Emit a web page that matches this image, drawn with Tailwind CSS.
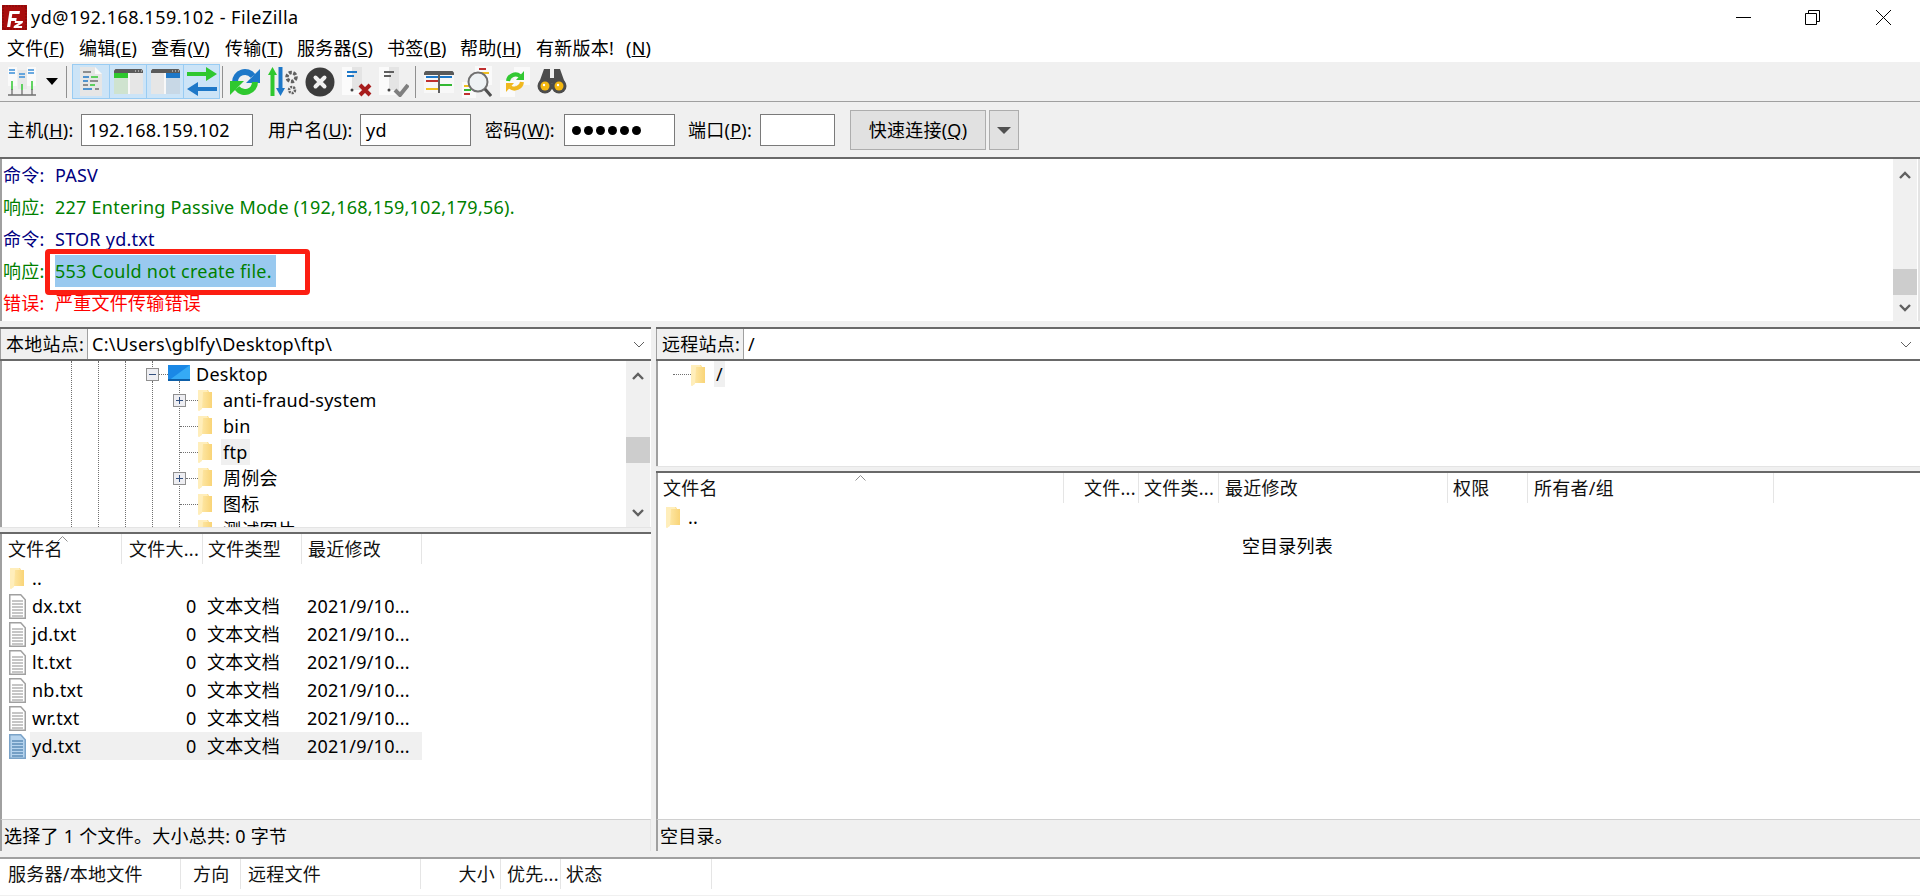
<!DOCTYPE html>
<html lang="en">
<head>
  <meta charset="UTF-8" />
  <title>yd@192.168.159.102 - FileZilla</title>
  <script src="https://cdn.jsdelivr.net/npm/@tailwindcss/browser@4"></script>
</head>
<body class="w-[1920px] h-[896px] overflow-hidden bg-[#f0f0f0] text-[18px] leading-none tracking-[0.25px] text-black font-['Noto_Sans','Noto_Sans_CJK_SC',sans-serif]">

  <!-- shared icons -->
  <svg class="absolute w-0 h-0">
    <defs>
      <linearGradient id="fold" x1="0" x2="1" y1="0" y2="0"><stop offset="0" stop-color="#ffedb4"/><stop offset="1" stop-color="#f9d477"/></linearGradient>
    </defs>
    <symbol id="folder" viewBox="0 0 14 22">
      <path d="M0 1h10l1 2h3v16H3l-2 3L0 21z" fill="url(#fold)"/>
      <path d="M0 1h9l1 2H5l-1 17-3 2-1-1z" fill="#ffeebb"/>
    </symbol>
    <symbol id="doc" viewBox="0 0 17 25" preserveAspectRatio="none">
      <path d="M.75.75h11l4.500 5v18.500H.75z" fill="#fff" stroke="#a0a0a0" stroke-width="1.500"/>
      <path d="M3 7h11M3 10h11M3 13h11M3 16h11M3 19h11M3 22h11" stroke="#b4b4b4" stroke-width="1.500"/>
    </symbol>
    <symbol id="docblue" viewBox="0 0 17 25" preserveAspectRatio="none">
      <path d="M.75.75h11l4.500 5v18.500H.75z" fill="#b7d4ee" stroke="#7ba3c8" stroke-width="1.500"/>
      <path d="M3 7h11M3 10h11M3 13h11M3 16h11M3 19h11M3 22h11" stroke="#5f8db8" stroke-width="1.500"/>
    </symbol>
    <symbol id="up" viewBox="0 0 12 8"><path d="M1 7l5-5 5 5" fill="none" stroke="#606060" stroke-width="2.400"/></symbol>
    <symbol id="down" viewBox="0 0 12 8"><path d="M1 1l5 5 5-5" fill="none" stroke="#606060" stroke-width="2.400"/></symbol>
    <symbol id="chev" viewBox="0 0 12 7"><path d="M1 1l5 5 5-5" fill="none" stroke="#606060" stroke-width="1"/></symbol>
    <symbol id="sort" viewBox="0 0 11 6"><path d="M.5 5.500l5-5 5 5" fill="none" stroke="#909090" stroke-width="1"/></symbol>
    <symbol id="plus" viewBox="0 0 13 13">
      <rect x=".5" y=".5" width="12" height="12" fill="#eeeef2" stroke="#8f8f8f"/>
      <path d="M3 6.500h7M6.500 3v7" stroke="#33507f" stroke-width="1"/>
    </symbol>
  </svg>

  <!-- title bar -->
  <header class="h-[34px] bg-white flex items-center pl-[2px]">
    <svg class="w-[25px] h-[25px]" viewBox="0 0 25 25">
      <rect width="25" height="25" fill="#a80d0d"/>
      <rect x="1" y="1" width="23" height="23" fill="none" stroke="#7c0808" stroke-dasharray="2 1"/>
      <path d="M5 22l2.500-16h10.500l-.5 3H10.300l-.6 4h5l-.5 3h-5l-1 6z" fill="#fff"/>
      <path d="M13 16h8l-.4 2-4.600 3h4.200l-.3 2h-8.400l.4-2 4.700-3h-3.900z" fill="#fff"/>
    </svg>
    <span class="ml-[4px] tracking-[0.5px]">yd@192.168.159.102 - FileZilla</span>
    <div class="ml-auto flex items-center h-full">
      <svg class="w-[15px] h-[15px] mr-[54px]" viewBox="0 0 15 15"><path d="M0 7.500h15" stroke="#000"/></svg>
      <svg class="w-[15px] h-[15px] mr-[56px]" viewBox="0 0 15 15"><path d="M.5 3.500h11v11H.5zM3.500 3.500v-3h11v11h-3" fill="none" stroke="#000"/></svg>
      <svg class="w-[15px] h-[15px] mr-[29px]" viewBox="0 0 15 15"><path d="M0 0l15 15M15 0L0 15" stroke="#000"/></svg>
    </div>
  </header>

  <!-- menu -->
  <nav class="h-[28px] bg-white flex items-center pl-[7px] pb-[1px]">
    <span class="w-[72px]">文件(<u>F</u>)</span>
    <span class="w-[72px]">编辑(<u>E</u>)</span>
    <span class="w-[74px]">查看(<u>V</u>)</span>
    <span class="w-[72px]">传输(<u>T</u>)</span>
    <span class="w-[90px]">服务器(<u>S</u>)</span>
    <span class="w-[73px]">书签(<u>B</u>)</span>
    <span class="w-[76px]">帮助(<u>H</u>)</span>
    <span class="w-[90px]">有新版本!</span>
    <span>(<u>N</u>)</span>
  </nav>

  <!-- toolbar -->
  <div class="h-[40px] flex items-center border-b border-[#a0a0a0] pl-[7px]">
    <svg class="w-[30px] h-[30px]" viewBox="0 0 30 30">
      <rect x="1" y="0" width="9" height="19" fill="#fafafa"/><rect x="11" y="3" width="9" height="19" fill="#e8e8e8"/><rect x="20" y="0" width="9" height="19" fill="#fafafa"/>
      <path d="M2 3h6M2 6h6M12 7h6M12 10h6M21 3h6M21 6h6" stroke="#3b8fd8" stroke-width="1.300"/>
      <path d="M5 14v9M15 17v6M25 14v9" stroke="#32c832" stroke-width="1.500"/>
      <path d="M1 28h28" stroke="#707070" stroke-width="1.500"/>
      <path d="M5 22v6M15 23v5M25 22v6" stroke="#707070" stroke-width="1.300"/>
    </svg>
    <svg class="w-[12px] h-[7px] ml-[9px]" viewBox="0 0 12 7"><path d="M0 0h12L6 7z" fill="#000"/></svg>
    <div class="w-px h-[32px] bg-[#909090] ml-[8px]"></div>
    <div class="flex ml-[5px] h-[35px] w-[148px] bg-[#cce4f7] border border-[#99ccf3]">
      <div class="w-[37px] flex items-center justify-center border-r border-[#99ccf3]">
        <svg class="w-[24px] h-[29px]" viewBox="0 0 24 29">
          <path d="M1 0h15l7 7v22H1z" fill="#e6e6e6"/><path d="M16 0l7 7h-7z" fill="#fafafa"/>
          <path d="M4 5h8" stroke="#707070" stroke-width="1.500"/>
          <path d="M4 10h6M4 14h5M4 22h9" stroke="#1e78c8" stroke-width="1.500"/>
          <path d="M12 10h7M11 18h5" stroke="#32c832" stroke-width="1.500"/>
          <path d="M11 14h8M4 18h5M16 22h4" stroke="#707070" stroke-width="1.500"/>
        </svg>
      </div>
      <div class="w-[37px] flex items-center justify-center border-r border-[#99ccf3]">
        <svg class="w-[29px] h-[25px]" viewBox="0 0 29 25">
          <rect width="29" height="25" fill="#e6e6e6"/><path d="M0 4V1.500L1.500 0h26L29 1.500V4z" fill="#5a5a5a"/>
          <path d="M21 2h1M24 2h1M27 2h1" stroke="#e6e6e6"/>
          <rect y="4" width="14" height="5" fill="#2fc82f"/><rect y="9" width="14" height="16" fill="#cfe3cf"/>
          <rect x="14" y="4" width="2" height="21" fill="#f8f8f8"/>
        </svg>
      </div>
      <div class="w-[37px] flex items-center justify-center border-r border-[#99ccf3]">
        <svg class="w-[29px] h-[25px]" viewBox="0 0 29 25">
          <rect width="29" height="25" fill="#e6e6e6"/><path d="M0 4V1.500L1.500 0h26L29 1.500V4z" fill="#5a5a5a"/>
          <path d="M21 2h1M24 2h1M27 2h1" stroke="#e6e6e6"/>
          <rect x="15" y="4" width="14" height="5" fill="#1e78c8"/><rect x="15" y="9" width="14" height="16" fill="#c8d8e6"/>
          <rect x="13" y="4" width="2" height="21" fill="#f8f8f8"/>
        </svg>
      </div>
      <div class="flex-1 flex items-center justify-center">
        <svg class="w-[30px] h-[29px]" viewBox="0 0 30 29">
          <path d="M0 5h19V0l11 7-11 7V9H0z" fill="#2fc82f"/>
          <path d="M30 20H11v-5L0 22l11 7v-5h19z" fill="#1e78c8"/>
        </svg>
      </div>
    </div>
    <div class="w-px h-[32px] bg-[#909090] ml-[2px]"></div>
    <svg class="w-[30px] h-[28px] ml-[7px]" viewBox="0 0 30 28">
      <path d="M5 14A10 10 0 0 1 23 8" fill="none" stroke="#1e78c8" stroke-width="6"/>
      <path d="M30 1v14H16z" fill="#1e78c8"/>
      <path d="M25 14A10 10 0 0 1 7 20" fill="none" stroke="#2fc82f" stroke-width="6"/>
      <path d="M0 27V13h14z" fill="#2fc82f"/>
    </svg>
    <svg class="w-[30px] h-[31px] ml-[8px]" viewBox="0 0 30 31">
      <path d="M4.500 1L9 9H6.500v21h-4V9H0z" fill="#2fc82f"/>
      <path d="M10.500 1h4v21H17l-4.500 8L8 22h2.500z" fill="#1e78c8"/>
      <circle cx="23.500" cy="11" r="4.500" fill="none" stroke="#606060" stroke-width="3.500" stroke-dasharray="3 1.500"/>
      <circle cx="24" cy="24" r="3" fill="none" stroke="#606060" stroke-width="2.500" stroke-dasharray="2 1"/>
    </svg>
    <svg class="w-[30px] h-[30px] ml-[7px]" viewBox="0 0 30 30">
      <circle cx="15" cy="15" r="14.500" fill="#3c3c3c"/>
      <path d="M10.500 10.500l9 9M19.500 10.500l-9 9" stroke="#f0f0f0" stroke-width="4" stroke-linecap="round"/>
    </svg>
    <svg class="w-[30px] h-[30px] ml-[7px]" viewBox="0 0 30 30">
      <rect x="0" y="0" width="20" height="28" fill="#fbfbfb"/><rect x="10" y="0" width="10" height="23" fill="#e4e4e4"/>
      <path d="M5 5h10M5 9h7" stroke="#1e78c8" stroke-width="2"/>
      <circle cx="10" cy="23" r="1.500" fill="#444"/>
      <path d="M18 18l10 10M28 18L18 28" stroke="#a81c1c" stroke-width="4"/>
    </svg>
    <svg class="w-[30px] h-[30px] ml-[7px]" viewBox="0 0 30 30">
      <rect x="0" y="0" width="20" height="28" fill="#fbfbfb"/><rect x="10" y="0" width="10" height="23" fill="#e4e4e4"/>
      <path d="M5 5h10M5 9h7" stroke="#606060" stroke-width="2"/>
      <circle cx="10" cy="23" r="1.500" fill="#444"/>
      <path d="M16 23l5 5 8-10" fill="none" stroke="#808080" stroke-width="4"/>
    </svg>
    <div class="w-px h-[32px] bg-[#909090] ml-[6px]"></div>
    <svg class="w-[30px] h-[22px] ml-[8px]" viewBox="0 0 30 22">
      <rect width="30" height="22" fill="#f8f8f8"/><path d="M0 4V1.500L1.500 0h27L30 1.500V4z" fill="#5a5a5a"/>
      <path d="M2 6h26" stroke="#1e78c8" stroke-width="2"/><path d="M2 10h13" stroke="#c03030" stroke-width="2"/>
      <path d="M15 14h13" stroke="#32b832" stroke-width="2"/><path d="M2 18h13" stroke="#f0c020" stroke-width="2"/>
      <path d="M15 4v18" stroke="#606060" stroke-width="2"/>
    </svg>
    <svg class="w-[30px] h-[32px] ml-[8px]" viewBox="0 0 30 32">
      <rect x="13" y="0" width="17" height="19" fill="#fafafa"/><path d="M17 3h7" stroke="#c03030" stroke-width="2"/><path d="M17 7h10" stroke="#f0c020" stroke-width="2"/>
      <rect x="0" y="16" width="14" height="16" fill="#fafafa"/><path d="M2 20h6" stroke="#f0c020" stroke-width="2"/><path d="M2 24h7" stroke="#32b832" stroke-width="2"/><path d="M2 28h6" stroke="#c03030" stroke-width="2"/>
      <circle cx="16" cy="16" r="9.500" fill="#eef2f4" stroke="#707070" stroke-width="2"/>
      <path d="M23 23l6 7" stroke="#505050" stroke-width="3"/>
    </svg>
    <svg class="w-[30px] h-[30px] ml-[8px]" viewBox="0 0 30 30">
      <rect x="14" y="0" width="16" height="18" fill="#fafafa"/><rect x="0" y="13" width="15" height="17" fill="#fafafa"/>
      <path d="M8 14A7.500 7.500 0 0 1 20 9" fill="none" stroke="#32c832" stroke-width="4"/>
      <path d="M24 4v9h-8z" fill="#32c832"/>
      <path d="M22 15A7.500 7.500 0 0 1 10 20" fill="none" stroke="#f0b820" stroke-width="4"/>
      <path d="M6 25v-9h8z" fill="#f0b820"/>
    </svg>
    <svg class="w-[30px] h-[25px] ml-[7px]" viewBox="0 0 30 25">
      <path d="M7 0h6v9h4V0h6l5 14H2z" fill="#4c4c4c"/>
      <circle cx="8" cy="17" r="7.500" fill="#4c4c4c"/><circle cx="22" cy="17" r="7.500" fill="#4c4c4c"/>
      <circle cx="8" cy="17" r="4.500" fill="#f5b810"/><circle cx="22" cy="17" r="4.500" fill="#f5b810"/>
      <circle cx="7" cy="16" r="1.200" fill="#fff"/><circle cx="21" cy="16" r="1.200" fill="#fff"/>
    </svg>
  </div>

  <!-- quickconnect -->
  <div class="h-[56px] mt-px flex items-center pl-[7px] border-b-2 border-[#696969]">
    <span class="w-[74px]">主机(<u>H</u>):</span>
    <div class="w-[172px] h-[32px] bg-white border border-[#7a7a7a] flex items-center pl-[6px]">192.168.159.102</div>
    <span class="ml-[15px] w-[92px]">用户名(<u>U</u>):</span>
    <div class="w-[111px] h-[32px] bg-white border border-[#7a7a7a] flex items-center pl-[5px]">yd</div>
    <span class="ml-[14px] w-[79px]">密码(<u>W</u>):</span>
    <div class="w-[111px] h-[32px] bg-white border border-[#7a7a7a] flex items-center pl-[7px] gap-[3px]">
      <i class="w-[9px] h-[9px] rounded-full bg-black"></i><i class="w-[9px] h-[9px] rounded-full bg-black"></i><i class="w-[9px] h-[9px] rounded-full bg-black"></i><i class="w-[9px] h-[9px] rounded-full bg-black"></i><i class="w-[9px] h-[9px] rounded-full bg-black"></i><i class="w-[9px] h-[9px] rounded-full bg-black"></i>
    </div>
    <span class="ml-[13px] w-[72px]">端口(<u>P</u>):</span>
    <div class="w-[75px] h-[32px] bg-white border border-[#7a7a7a]"></div>
    <div class="ml-[15px] w-[136px] h-[40px] bg-[#e1e1e1] border border-[#adadad] flex items-center justify-center">快速连接(<u>Q</u>)</div>
    <div class="ml-[3px] w-[30px] h-[40px] bg-[#e1e1e1] border border-[#adadad] flex items-center justify-center">
      <svg class="w-[14px] h-[7px]" viewBox="0 0 14 7"><path d="M0 0h14L7 7z" fill="#505050"/></svg>
    </div>
  </div>

  <!-- message log -->
  <section class="relative h-[162px] bg-white border-r-2 border-[#e4e4e4] flex">
    <div class="flex-1 pl-[1px] border-l-2 border-[#a0a0a0]">
      <div class="h-[32px] flex items-center text-[#000080]"><span class="w-[52px]">命令:</span>PASV</div>
      <div class="h-[32px] flex items-center text-[#008000]"><span class="w-[52px]">响应:</span>227 Entering Passive Mode (192,168,159,102,179,56).</div>
      <div class="h-[32px] flex items-center text-[#000080]"><span class="w-[52px]">命令:</span>STOR yd.txt</div>
      <div class="h-[32px] flex items-center text-[#008000]"><span class="w-[52px]">响应:</span><span class="h-[32px] w-[221px] flex items-center bg-[#99c9ef]">553 Could not create file.</span></div>
      <div class="h-[32px] flex items-center text-[#ff0000]"><span class="w-[52px]">错误:</span>严重文件传输错误</div>
    </div>
    <div class="w-[24px] mr-px bg-[#f0f0f0] flex flex-col items-center relative">
      <svg class="w-[12px] h-[8px] mt-[12px]" viewBox="0 0 12 8"><use href="#up"/></svg>
      <div class="mt-auto w-full h-[26px] bg-[#cdcdcd]"></div>
      <svg class="w-[12px] h-[8px] my-[9px]" viewBox="0 0 12 8"><use href="#down"/></svg>
    </div>
    <div class="absolute left-[45px] top-[90px] w-[265px] h-[46px] border-[5px] border-[#fc1e12] rounded-[4px]"></div>
  </section>

  <!-- panes -->
  <div class="flex h-[530px] pt-[6px]">
    <!-- local -->
    <div class="w-[651px] flex flex-col">
      <div class="h-[34px] flex border-t-2 border-b-2 border-t-[#696969] border-b-[#696969] bg-white">
        <div class="w-[88px] bg-[#f0f0f0] border-x border-[#a0a0a0] flex items-center pl-[5px]">本地站点:</div>
        <div class="flex-1 pl-[4px] flex items-center">C:\Users\gblfy\Desktop\ftp\</div>
        <svg class="w-[12px] h-[7px] self-center mr-[6px]" viewBox="0 0 12 7"><use href="#chev"/></svg>
      </div>
      <div class="relative h-[166px] bg-white border-l-2 border-[#a0a0a0] overflow-hidden flex">
        <i class="absolute left-[69px] top-0 h-full border-l border-dotted border-[#707070]"></i>
        <i class="absolute left-[96px] top-0 h-full border-l border-dotted border-[#707070]"></i>
        <i class="absolute left-[123px] top-0 h-full border-l border-dotted border-[#707070]"></i>
        <i class="absolute left-[150px] top-0 h-[8px] border-l border-dotted border-[#707070]"></i>
        <i class="absolute left-[150px] top-[20px] h-full border-l border-dotted border-[#707070]"></i>
        <i class="absolute left-[177px] top-[20px] h-full border-l border-dotted border-[#707070]"></i>
        <div class="flex-1 relative">
          <div class="h-[26px] flex items-center pl-[144px]">
            <svg class="w-[13px] h-[13px] shrink-0" viewBox="0 0 13 13"><rect x=".5" y=".5" width="12" height="12" fill="#eeeef2" stroke="#8f8f8f"/><path d="M3 6.500h7" stroke="#33507f"/></svg>
            <i class="w-[9px] border-t border-dotted border-[#707070]"></i>
            <svg class="w-[22px] h-[16px] mb-[2px] shrink-0" viewBox="0 0 22 16"><rect width="22" height="16" fill="#1a88e6"/><path d="M0 16L22 0v15H0z" fill="#35aaf5"/><rect y="14" width="22" height="2" fill="#0d5fa8"/></svg>
            <span class="ml-[6px]">Desktop</span>
          </div>
          <div class="h-[26px] flex items-center pl-[171px]">
            <svg class="w-[13px] h-[13px] shrink-0"><use href="#plus"/></svg>
            <i class="w-[12px] border-t border-dotted border-[#707070]"></i>
            <svg class="w-[14px] h-[22px] shrink-0"><use href="#folder"/></svg>
            <span class="ml-[11px]">anti-fraud-system</span>
          </div>
          <div class="h-[26px] flex items-center pl-[178px]">
            <i class="w-[18px] border-t border-dotted border-[#707070]"></i>
            <svg class="w-[14px] h-[22px] shrink-0"><use href="#folder"/></svg>
            <span class="ml-[11px]">bin</span>
          </div>
          <div class="h-[26px] flex items-center pl-[178px]">
            <i class="w-[18px] border-t border-dotted border-[#707070]"></i>
            <svg class="w-[14px] h-[22px] shrink-0"><use href="#folder"/></svg>
            <span class="ml-[9px] h-[26px] px-[2px] flex items-center bg-[#f0f0f0]">ftp</span>
          </div>
          <div class="h-[26px] flex items-center pl-[171px]">
            <svg class="w-[13px] h-[13px] shrink-0"><use href="#plus"/></svg>
            <i class="w-[12px] border-t border-dotted border-[#707070]"></i>
            <svg class="w-[14px] h-[22px] shrink-0"><use href="#folder"/></svg>
            <span class="ml-[11px]">周例会</span>
          </div>
          <div class="h-[26px] flex items-center pl-[178px]">
            <i class="w-[18px] border-t border-dotted border-[#707070]"></i>
            <svg class="w-[14px] h-[22px] shrink-0"><use href="#folder"/></svg>
            <span class="ml-[11px]">图标</span>
          </div>
          <div class="h-[26px] flex items-center pl-[196px]">
            <svg class="w-[14px] h-[22px] shrink-0"><use href="#folder"/></svg>
            <span class="ml-[11px]">测试图片</span>
          </div>
        </div>
        <div class="w-[24px] mr-px bg-[#f0f0f0] flex flex-col items-center relative">
          <svg class="w-[12px] h-[8px] mt-[11px]" viewBox="0 0 12 8"><use href="#up"/></svg>
          <div class="w-full h-[26px] bg-[#cdcdcd] mt-[57px]"></div>
          <svg class="w-[12px] h-[8px] mt-[46px]" viewBox="0 0 12 8"><use href="#down"/></svg>
        </div>
      </div>
      <div class="h-[7px] border-t border-[#e4e4e4] border-b-2 border-b-[#696969]"></div>
      <div class="flex-1 bg-white border-l-2 border-[#a0a0a0] flex flex-col relative">
        <div class="h-[30px] flex items-center text-[#111]">
          <div class="w-[120px] h-full border-r border-[#e5e5e5] flex items-center pl-[6px]">文件名</div>
          <div class="w-[81px] h-full border-r border-[#e5e5e5] flex items-center pl-[7px] whitespace-nowrap">文件大...</div>
          <div class="w-[99px] h-full border-r border-[#e5e5e5] flex items-center pl-[5px]">文件类型</div>
          <div class="w-[120px] h-full border-r border-[#e5e5e5] flex items-center pl-[6px]">最近修改</div>
        </div>
        <svg class="absolute left-[55px] top-[2px] w-[11px] h-[6px]" viewBox="0 0 11 6"><use href="#sort"/></svg>
        <div class="h-[28px] flex items-center pl-[8px]"><svg class="w-[14px] h-[22px]"><use href="#folder"/></svg><span class="ml-[8px]">..</span></div>
        <div class="h-[28px] flex items-center pl-[7px]"><svg class="w-[17px] h-[25px] shrink-0"><use href="#doc"/></svg><span class="w-[154px] ml-[6px]">dx.txt</span><span class="w-[8px]">0</span><span class="ml-[13px] w-[100px]">文本文档</span><span>2021/9/10...</span></div>
        <div class="h-[28px] flex items-center pl-[7px]"><svg class="w-[17px] h-[25px] shrink-0"><use href="#doc"/></svg><span class="w-[154px] ml-[6px]">jd.txt</span><span class="w-[8px]">0</span><span class="ml-[13px] w-[100px]">文本文档</span><span>2021/9/10...</span></div>
        <div class="h-[28px] flex items-center pl-[7px]"><svg class="w-[17px] h-[25px] shrink-0"><use href="#doc"/></svg><span class="w-[154px] ml-[6px]">lt.txt</span><span class="w-[8px]">0</span><span class="ml-[13px] w-[100px]">文本文档</span><span>2021/9/10...</span></div>
        <div class="h-[28px] flex items-center pl-[7px]"><svg class="w-[17px] h-[25px] shrink-0"><use href="#doc"/></svg><span class="w-[154px] ml-[6px]">nb.txt</span><span class="w-[8px]">0</span><span class="ml-[13px] w-[100px]">文本文档</span><span>2021/9/10...</span></div>
        <div class="h-[28px] flex items-center pl-[7px]"><svg class="w-[17px] h-[25px] shrink-0"><use href="#doc"/></svg><span class="w-[154px] ml-[6px]">wr.txt</span><span class="w-[8px]">0</span><span class="ml-[13px] w-[100px]">文本文档</span><span>2021/9/10...</span></div>
        <div class="h-[28px] flex items-center pl-[7px]"><svg class="w-[17px] h-[25px] shrink-0"><use href="#docblue"/></svg><div class="h-full w-[392px] bg-[#f0f0f0] flex items-center pl-[2px] ml-[4px]"><span class="w-[154px]">yd.txt</span><span class="w-[8px]">0</span><span class="ml-[13px] w-[100px]">文本文档</span><span>2021/9/10...</span></div></div>
      </div>
      <div class="h-[32px] border-t border-[#d0d0d0] border-l-2 border-l-[#a0a0a0] border-r border-r-[#e4e4e4] flex items-center pl-[2px]">选择了 1 个文件。大小总共: 0 字节</div>
    </div>

    <!-- remote -->
    <div class="ml-[5px] flex-1 flex flex-col">
      <div class="h-[34px] flex border-t-2 border-b-2 border-t-[#696969] border-b-[#696969] bg-white">
        <div class="w-[88px] bg-[#f0f0f0] border-x border-[#a0a0a0] flex items-center pl-[5px]">远程站点:</div>
        <div class="flex-1 pl-[4px] flex items-center">/</div>
        <svg class="w-[12px] h-[7px] self-center mr-[8px]" viewBox="0 0 12 7"><use href="#chev"/></svg>
      </div>
      <div class="h-[105px] bg-white border-l-2 border-[#a0a0a0] flex items-start pl-[15px]">
        <i class="w-[18px] mt-[13px] border-t border-dotted border-[#707070]"></i>
        <svg class="w-[14px] h-[22px] mt-[3px]"><use href="#folder"/></svg>
        <span class="ml-[9px] h-[26px] px-[2px] flex items-center bg-[#f0f0f0]">/</span>
      </div>
      <div class="h-[7px] border-t border-[#e4e4e4] border-b-2 border-b-[#696969]"></div>
      <div class="flex-1 bg-white border-l-2 border-[#a0a0a0] relative flex flex-col">
        <div class="h-[30px] flex items-center text-[#111]">
          <div class="w-[406px] h-full border-r border-[#e5e5e5] flex items-center pl-[5px]">文件名</div>
          <div class="w-[75px] h-full border-r border-[#e5e5e5] flex items-center pl-[20px] whitespace-nowrap">文件...</div>
          <div class="w-[80px] h-full border-r border-[#e5e5e5] flex items-center pl-[5px] whitespace-nowrap">文件类...</div>
          <div class="w-[229px] h-full border-r border-[#e5e5e5] flex items-center pl-[6px]">最近修改</div>
          <div class="w-[80px] h-full border-r border-[#e5e5e5] flex items-center pl-[5px]">权限</div>
          <div class="w-[246px] h-full border-r border-[#e5e5e5] flex items-center pl-[6px]">所有者/组</div>
        </div>
        <svg class="absolute left-[197px] top-[2px] w-[11px] h-[6px]" viewBox="0 0 11 6"><use href="#sort"/></svg>
        <div class="h-[28px] flex items-center pl-[8px]"><svg class="w-[14px] h-[22px]"><use href="#folder"/></svg><span class="ml-[8px]">..</span></div>
        <div class="w-[1262px] mt-[1px] h-[28px] flex items-center justify-center pr-[3px]">空目录列表</div>
      </div>
      <div class="h-[32px] border-t border-[#d0d0d0] border-l-2 border-l-[#a0a0a0] flex items-center pl-[2px]">空目录。</div>
    </div>
  </div>

  <!-- queue -->
  <div class="mt-[6px] h-[38px] bg-white border-t-2 border-[#a0a0a0]">
    <div class="h-[30px] flex items-center text-[#111]">
      <div class="w-[181px] h-full border-r border-[#e5e5e5] flex items-center pl-[8px]">服务器/本地文件</div>
      <div class="w-[60px] h-full border-r border-[#e5e5e5] flex items-center pl-[12px]">方向</div>
      <div class="w-[180px] h-full border-r border-[#e5e5e5] flex items-center pl-[7px]">远程文件</div>
      <div class="w-[80px] h-full border-r border-[#e5e5e5] flex items-center justify-end pr-[5px]">大小</div>
      <div class="w-[60px] h-full border-r border-[#e5e5e5] flex items-center pl-[6px] whitespace-nowrap">优先...</div>
      <div class="w-[151px] h-full border-r border-[#e5e5e5] flex items-center pl-[5px]">状态</div>
    </div>
  </div>
</body>
</html>
